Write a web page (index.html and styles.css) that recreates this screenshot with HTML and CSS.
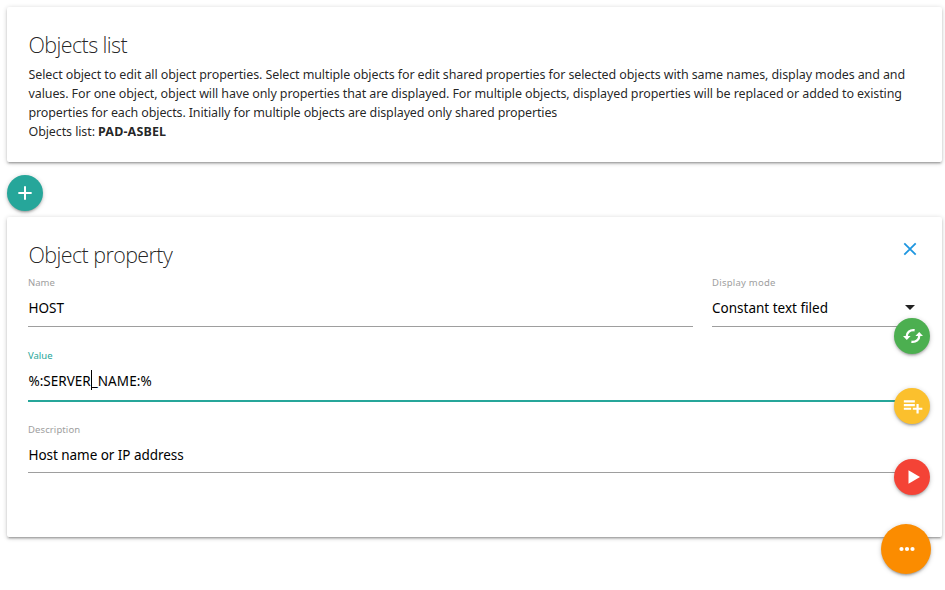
FILE: index.html
```html
<!DOCTYPE html>
<html lang="en">
<head>
<meta charset="utf-8">
<title>Objects list</title>
<link rel="stylesheet" href="styles.css">
</head>
<body>
<main class="page">
  <section class="card card-list">
    <h1 class="card-title title-list">Objects list</h1>
    <p class="intro">
      <span class="line line-1">Select object to edit all object properties. Select multiple objects for edit shared properties for selected objects with same names, display modes and and</span>
      <span class="line line-2">values. For one object, object will have only properties that are displayed. For multiple objects, displayed properties will be replaced or added to existing</span>
      <span class="line line-3">properties for each objects. Initially for multiple objects are displayed only shared properties</span>
      <span class="line line-4">Objects list: <b>PAD-ASBEL</b></span>
    </p>
  </section>

  <button class="fab teal" aria-label="Add">
    <svg width="20" height="20" viewBox="0 0 24 24"><path d="M20 13.2h-6.8V20h-2.4v-6.8H4v-2.4h6.8V4h2.4v6.8H20z"/></svg>
  </button>

  <section class="card card-property">
    <header class="card-head">
      <h2 class="card-title title-property">Object property</h2>
      <svg class="close" width="14" height="14" viewBox="0 0 14 14"><path d="M1.3 1.3 12.7 12.7M12.7 1.3 1.3 12.7"/></svg>
    </header>
    <div class="row">
      <div class="field field-name">
        <label class="label">Name</label>
        <div class="input"><span class="host">HOST</span></div>
      </div>
      <div class="field field-mode">
        <label class="label mode-label">Display mode</label>
        <div class="input select"><span class="mode">Constant text filed</span>
          <svg class="caret" width="10" height="5" viewBox="0 0 10 5"><path d="M0 0h10L5 5z"/></svg>
        </div>
      </div>
    </div>
    <div class="field field-value active">
      <label class="label">Value</label>
      <div class="input"><span class="server">%:SERVER</span><i class="cursor"></i><span class="server-end">_NAME:%</span></div>
    </div>
    <div class="field field-description">
      <label class="label desc-label">Description</label>
      <div class="input"><span class="desc">Host name or IP address</span></div>
    </div>
  </section>
</main>

<nav class="actions">
  <button class="fab green" aria-label="Reload">
    <svg width="20" height="16" viewBox="0 0 20 16"><path class="arc" d="M3.7 8.6C3.6 4.6 7 1.5 11.6 2.2M16.3 7.4C16.4 11.4 13 14.5 8.4 13.8"/><path d="M0 8h7.6L3.8 12.1zM20 8h-7.6L16.2 3.9z"/></svg>
  </button>
  <button class="fab yellow" aria-label="Add to list">
    <svg width="22" height="22" viewBox="0 0 24 24"><path d="M14 9.8H2v2.4h12V9.8zm0-4H2v2.4h12V5.800zm4.200 8v-4h-2.400v4h-4v2.400h4v4h2.400v-4h4v-2.400h-4zM2 16.200h8v-2.400H2v2.400z"/></svg>
  </button>
  <button class="fab red" aria-label="Run">
    <svg width="24" height="24" viewBox="0 0 24 24"><path d="M8.500 5.300v13.400L20 12z"/></svg>
  </button>
  <button class="fab large orange" aria-label="More">
    <svg width="16" height="6" viewBox="0 0 16 6"><circle cx="2.500" cy="3" r="2.100"/><circle cx="8" cy="3" r="2.100"/><circle cx="13.500" cy="3" r="2.100"/></svg>
  </button>
</nav>
</body>
</html>
```
FILE: styles.css
```css
* { box-sizing: border-box; }
body {
  margin: 0;
  height: 590px;
  overflow: hidden;
  background: #fff;
  color: rgba(0, 0, 0, .87);
  font-family: "Noto Sans", "Open Sans", sans-serif;
  font-size: 13px;
}
.page { padding: 7px 3px 0 7px; }
.card {
  background: #fff;
  border-radius: 2px;
  padding: 21px;
  box-shadow: 0 2px 2px rgba(0, 0, 0, .14), 0 3px 1px -2px rgba(0, 0, 0, .12), 0 1px 5px rgba(0, 0, 0, .2);
}
.card-list { height: 155px; margin-bottom: 13px; padding-right: 0; }
.card-property { height: 320px; margin-top: 6px; }
.card-title {
  margin: 0;
  padding-left: .5px;
  height: 32px;
  line-height: 33px;
  font-family: "Open Sans", "Noto Sans", sans-serif;
  font-size: 21.5px;
  font-weight: 300;
  letter-spacing: -.6px;
  white-space: nowrap;
}
.intro { margin: 5px 0 0; padding-left: .5px; }
.line {
  display: block;
  width: max-content;
  height: 19px;
  line-height: 19px;
  font-size: 12.5px;
  letter-spacing: -.106px;
  white-space: nowrap;
}
.line-3 { letter-spacing: -.13px; }
.line b { letter-spacing: .15px; }
.fab {
  display: flex;
  align-items: center;
  justify-content: center;
  width: 36px;
  height: 36px;
  padding: 0;
  border: 0;
  border-radius: 50%;
  box-shadow: 0 2px 2px rgba(0, 0, 0, .14), 0 3px 1px -2px rgba(0, 0, 0, .12), 0 1px 5px rgba(0, 0, 0, .2);
}
.fab svg { fill: #fff; }
.fab .arc { fill: none; stroke: #fff; stroke-width: 2.4; }
.teal { background: #26a69a; }
.green { background: #4caf50; }
.green svg { margin-left: 2px; }
.yellow { background: #fbc02d; }
.yellow svg { margin-left: 1px; }
.red { background: #f44336; }
.orange { background: #fb8c00; }
.large { width: 50px; height: 50px; }
.large svg { margin-left: 1px; }
.card-head { display: flex; justify-content: space-between; height: 38px; }
.close {
  margin: 4px 4px 0 0;
  fill: none;
  stroke: #1e96e0;
  stroke-width: 1.8;
}
.row { display: flex; gap: 19px; }
.field { display: flex; flex-direction: column; }
.field-name { width: 665px; }
.field-mode { flex: 1; }
.label {
  height: 14px;
  line-height: 14px;
  font-size: 9.5px;
  color: #9e9e9e;
}
.mode-label { letter-spacing: .25px; }
.desc-label { letter-spacing: .1px; }
.input {
  display: flex;
  align-items: center;
  height: 37px;
  border-bottom: 1px solid #9e9e9e;
  color: #000;
  font-size: 13.5px;
  white-space: nowrap;
}
.label, .input span { align-self: flex-start; }
.input span { line-height: 36px; }
.host, .server, .desc { padding-left: .5px; }
.desc { letter-spacing: -.05px; }
.server-end { letter-spacing: .1px; }
.select { justify-content: space-between; }
.caret { margin-right: 6px; margin-top: -2px; fill: #212121; }
.field-value { margin-top: 22px; }
.active .label { color: #26a69a; }
.active .input { height: 39px; border-bottom: 2px solid #26a69a; }
.cursor { width: 1px; height: 20px; margin-top: -4px; background: #000; }
.field-description { margin-top: 21px; }
.field-description .input { height: 36px; }
.actions {
  position: absolute;
  top: 318px;
  right: 14px;
  display: flex;
  flex-direction: column;
  align-items: flex-end;
  gap: 34px;
}
.actions .fab { margin-right: 1px; }
.actions .red { margin-top: 1px; }
.actions .large { margin: -5px 0 0; }
```
